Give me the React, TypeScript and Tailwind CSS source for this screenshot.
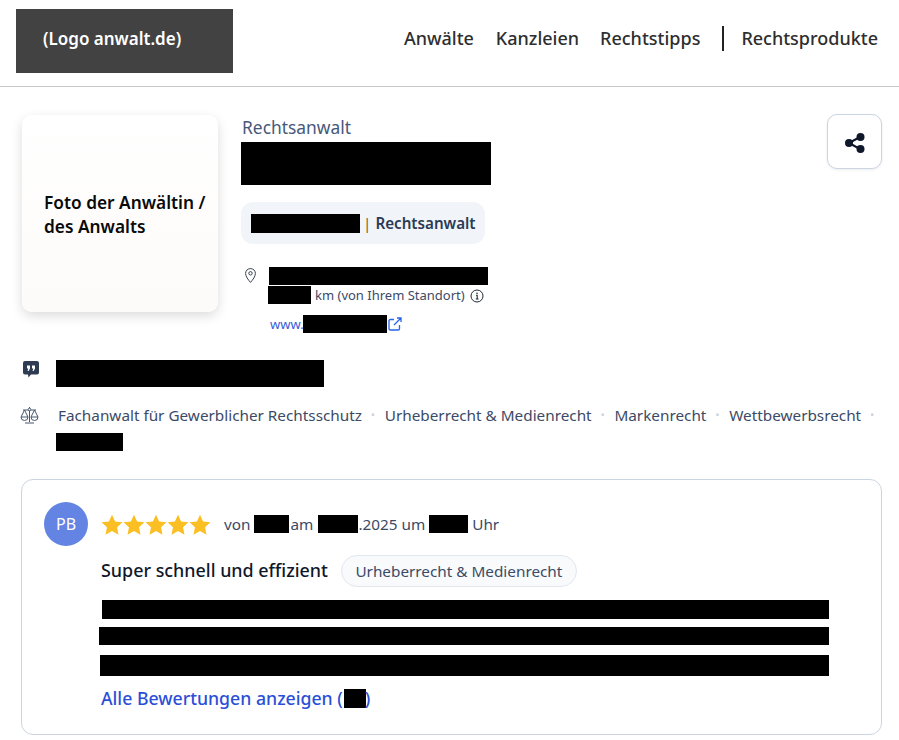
import React from "react";

const Bar = ({ className }: { className: string }) => <div className={`bg-black shrink-0 ${className}`} />;
const InlineBar = ({ className }: { className: string }) => <span className={`inline-block bg-black align-middle ${className}`} />;

const Star = () => (
  <svg width="22" height="21" viewBox="0 0 24 23"><path d="M12 .8l3.4 7.4 8 .9-5.9 5.5 1.6 8L12 18.6l-7.1 4 1.6-8L.6 9.1l8-.9z" fill="#fbbf24" /></svg>
);

export default function App() {
  return (
    <div className="w-[899px] h-[740px] overflow-hidden bg-white text-[#3b4a66] font-['Noto_Sans','Open_Sans',sans-serif]">
      <header className="h-[87px] border-b border-[#c8c8c8] flex items-start justify-between pl-4 pr-[21px]">
        <div className="mt-[9px] w-[217px] h-[64px] bg-[#424242] text-white text-[17px] font-semibold flex items-center pl-[27px] pb-[5px]">(Logo anwalt.de)</div>
        <nav className="mt-[26px] flex items-center text-[18px] font-medium text-[#2e2e2e] h-[25px]">
          <span>Anwälte</span>
          <span className="ml-[22px]">Kanzleien</span>
          <span className="ml-[21px]">Rechtstipps</span>
          <span className="ml-[22px] h-[25px] w-[2px] bg-[#222]" />
          <span className="ml-[17px]">Rechtsprodukte</span>
        </nav>
      </header>

      <section className="relative flex pl-[22px] pt-[28px]">
        <div className="w-[196px] h-[197px] rounded-[10px] bg-gradient-to-b from-white to-[#fdfbf9] shadow-[0_4px_12px_rgba(0,0,0,0.14)] flex items-center pl-[22px] text-[#0a0a0a] text-[17.3px] font-semibold leading-[24px] pt-[3px]">
          <div>Foto der Anwältin /<br />des Anwalts</div>
        </div>
        <div className="ml-[23px] flex flex-col">
          <div className="ml-[1px] text-[17.4px] leading-[24px] text-[#46587a]">Rechtsanwalt</div>
          <Bar className="mt-[3px] w-[250px] h-[43px]" />
          <div className="mt-[17px] w-[244px] h-[42px] rounded-[12px] bg-[#f1f5f9] flex items-center pl-[10px] text-[15.200px] font-semibold text-[#2b3a55]">
            <Bar className="w-[109px] h-[19px]" />
            <span className="ml-[3px] text-[#8a5a1c] font-normal">|</span>
            <span className="ml-[4px]">Rechtsanwalt</span>
          </div>
          <div className="mt-[23px] flex">
            <svg className="ml-[4px] mt-[1px]" width="11" height="15" viewBox="0 0 11 15" fill="none" stroke="#374151" strokeWidth="1"><path d="M5.500.6C2.600.6.6 2.700.6 5.400c0 3 2.600 6.400 4.900 9 2.300-2.600 4.900-6 4.900-9C10.400 2.700 8.400.6 5.500.6z" /><circle cx="5.500" cy="5.300" r="1.700" /></svg>
            <div className="ml-[12px] flex flex-col">
              <Bar className="ml-[1px] w-[219px] h-[18px]" />
              <div className="flex items-center h-[19px] text-[13px] text-[#3b4a66] whitespace-nowrap">
                <Bar className="w-[43px] h-[18px]" />
                <span className="ml-[4px] pt-[3px]">km (von Ihrem Standort)</span>
                <svg className="ml-[5px] mt-[3px]" width="14" height="14" viewBox="0 0 14 14" fill="none" stroke="#1f2937"><circle cx="7" cy="7" r="6" /><path d="M6 6.300h1.200V10M5.800 10h2.800" strokeWidth="1.100" /><circle cx="7" cy="4.300" r=".8" fill="#1f2937" stroke="none" /></svg>
              </div>
              <div className="mt-[11px] flex items-center h-[18px] text-[13px] text-[#3b5bdb]">
                <span className="ml-[2px] w-[33px] pt-[1px]">www.</span>
                <Bar className="w-[84px] h-[18px]" />
                <svg className="ml-[1px]" width="14" height="14" viewBox="0 0 14 14" fill="none" stroke="#2563eb" strokeWidth="1.300"><path d="M6 2.500H2.300a1.300 1.300 0 0 0-1.300 1.300v7.900a1.300 1.300 0 0 0 1.300 1.300h7.900a1.300 1.300 0 0 0 1.300-1.300V8M6 8l7-7M9 1h4v4" /></svg>
              </div>
            </div>
          </div>
        </div>
        <button className="absolute left-[827px] top-[27px] w-[55px] h-[55px] rounded-[10px] border border-[#cbd5e1] bg-white shadow-[0_1px_3px_rgba(15,23,42,0.08)] flex items-center justify-center">
          <svg className="mt-[3px]" width="22" height="22" viewBox="0 0 22 22" fill="none"><path d="M5 11L16 5M5 11l11 6" stroke="#0f172a" strokeWidth="2" /><circle cx="5" cy="11" r="4" fill="#0f172a" /><circle cx="16.500" cy="5" r="4" fill="#0f172a" /><circle cx="16.500" cy="17" r="4" fill="#0f172a" /></svg>
        </button>
      </section>

      <section className="mt-[27px] pl-[23px] flex items-start">
        <svg className="mt-[1px]" width="16" height="17" viewBox="0 0 16 17"><path d="M2 0h12a2 2 0 0 1 2 2v9.500a2 2 0 0 1-2 2H8l-2.500 3-.5-3H2a2 2 0 0 1-2-2V2a2 2 0 0 1 2-2z" fill="#2f3b52" /><path d="M4 4.500h3v3L5.600 10H4.500l.8-2.500H4zM9 4.500h3v3L10.600 10H9.500l.8-2.500H9z" fill="#fff" /></svg>
        <Bar className="ml-[17px] w-[268px] h-[27px]" />
      </section>

      <section className="mt-[16px] pl-[20px] flex items-start">
        <svg className="mt-[4px]" width="19" height="17" viewBox="0 0 19 17" fill="none" stroke="#46566f" strokeWidth="1"><path d="M9.500 0v15M5 16h9M3 3h13M4.500 3L1 10h7zM14.500 3L11 10h7zM1 10a3.500 3.500 0 0 0 7 0M11 10a3.500 3.500 0 0 0 7 0" /><circle cx="9.500" cy="2.500" r="1.300" fill="#fff" /></svg>
        <div className="ml-[17px] flex flex-col">
          <div className="h-[25px] flex items-center text-[15.300px] whitespace-nowrap ml-[2px] text-[#3b4a66]">
            <span>Fachanwalt für Gewerblicher Rechtsschutz</span>
            <span className="ml-[9px] mr-[10px] text-[10px] text-[#c5cfdb]">•</span>
            <span>Urheberrecht &amp; Medienrecht</span>
            <span className="ml-[9px] mr-[10px] text-[10px] text-[#c5cfdb]">•</span>
            <span>Markenrecht</span>
            <span className="ml-[9px] mr-[10px] text-[10px] text-[#c5cfdb]">•</span>
            <span>Wettbewerbsrecht</span>
            <span className="ml-[9px] text-[10px] text-[#c5cfdb]">•</span>
          </div>
          <Bar className="mt-[5px] w-[67px] h-[18px]" />
        </div>
      </section>

      <section className="mt-[28px] ml-[21px] w-[861px] h-[256px] rounded-[12px] border border-[#cbd5e1] pl-[22px] pt-[22px] flex">
        <div className="w-[44px] h-[44px] rounded-full bg-[#6384e3] text-white text-[16px] flex items-center justify-center">PB</div>
        <div className="ml-[13px] flex flex-col">
          <div className="h-[44px] flex items-center text-[15.300px] text-[#3b4a66] whitespace-nowrap">
            <div className="flex"><Star /><Star /><Star /><Star /><Star /></div>
            <span className="ml-[13px]">von</span>
            <Bar className="ml-[4px] w-[35px] h-[18px]" />
            <span className="ml-[1px]">am</span>
            <Bar className="ml-[5px] w-[40px] h-[18px]" />
            <span>.2025 um</span>
            <Bar className="ml-[4px] w-[39px] h-[18px]" />
            <span className="ml-[4px]">Uhr</span>
          </div>
          <div className="mt-[9px] flex items-center h-[32px]">
            <span className="text-[17.900px] font-medium text-[#0f172a] pb-[2px]">Super schnell und effizient</span>
            <span className="ml-[13px] h-[32px] w-[236px] rounded-full border border-[#e2e8f0] bg-[#f8fafc] flex items-center justify-center text-[15.300px] text-[#3b4a66]">Urheberrecht &amp; Medienrecht</span>
          </div>
          <Bar className="mt-[13px] ml-[1px] w-[727px] h-[19px]" />
          <Bar className="mt-[8px] -ml-[2px] w-[730px] h-[18px]" />
          <Bar className="mt-[10px] -ml-[1px] w-[729px] h-[21px]" />
          <div className="mt-[10px] h-[24px] flex items-center text-[17.700px] font-medium text-[#2a4fd7] whitespace-nowrap">
            Alle Bewertungen anzeigen (<InlineBar className="ml-[1px] w-[22px] h-[19px]" /><span className="-ml-[1px]">)</span>
          </div>
        </div>
      </section>
    </div>
  );
}
